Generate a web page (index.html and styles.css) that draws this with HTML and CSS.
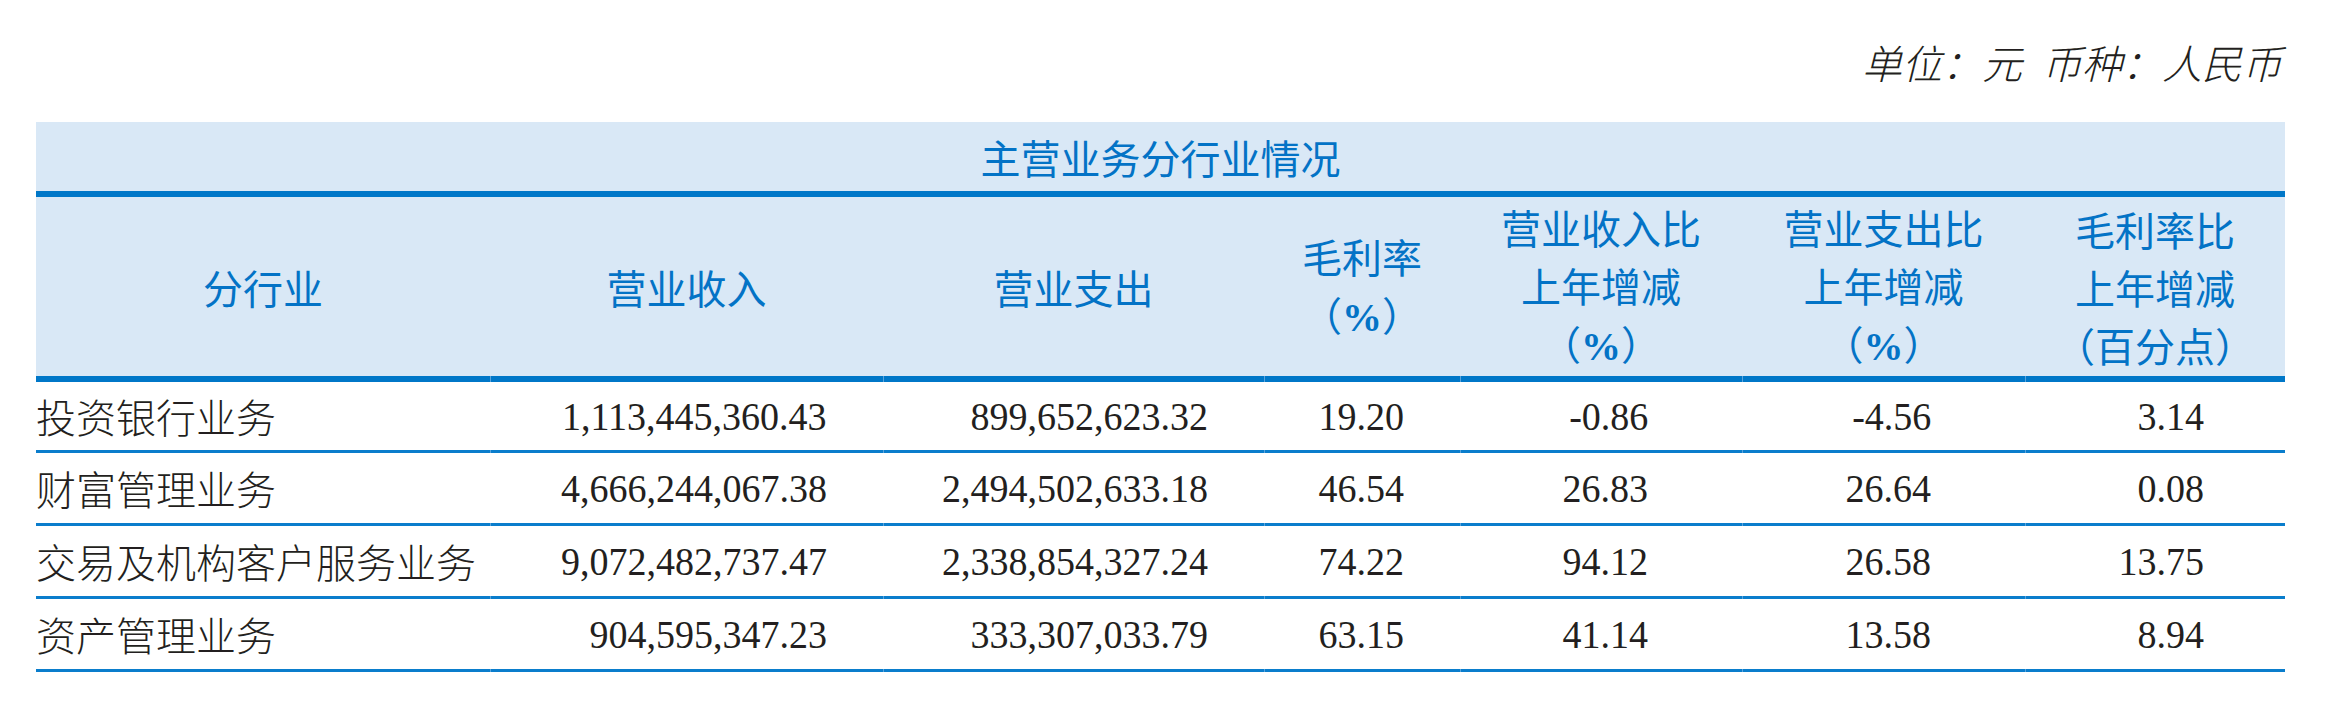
FILE: index.html
```html
<!DOCTYPE html>
<html lang="zh-CN">
<head>
<meta charset="utf-8">
<title>主营业务分行业情况</title>
<link rel="stylesheet" href="styles.css">
</head>
<body>
<div class="page">
  <div class="unit">单位：元&ensp;币种：人民币</div>
  <table class="tbl">
    <colgroup>
      <col class="w1"><col class="w2"><col class="w3"><col class="w4"><col class="w5"><col class="w6"><col class="w7">
    </colgroup>
    <thead>
      <tr class="title-row"><th colspan="7">主营业务分行业情况</th></tr>
      <tr class="head-row">
        <th>分行业</th>
        <th class="sep">营业收入</th>
        <th class="sep">营业支出</th>
        <th class="sep">毛利率<br>（<span class="pct">%</span>）</th>
        <th class="sep">营业收入比<br>上年增减<br>（<span class="pct">%</span>）</th>
        <th class="sep">营业支出比<br>上年增减<br>（<span class="pct">%</span>）</th>
        <th class="sep">毛利率比<br>上年增减<br>（百分点）</th>
      </tr>
    </thead>
    <tbody>
      <tr>
        <td class="label">投资银行业务</td>
        <td class="num c2 sep"><span>1,113,445,360.43</span></td>
        <td class="num c3 sep"><span>899,652,623.32</span></td>
        <td class="num c4 sep"><span>19.20</span></td>
        <td class="num c5 sep"><span>-0.86</span></td>
        <td class="num c6 sep"><span>-4.56</span></td>
        <td class="num c7 sep"><span>3.14</span></td>
      </tr>
      <tr>
        <td class="label">财富管理业务</td>
        <td class="num c2 sep"><span>4,666,244,067.38</span></td>
        <td class="num c3 sep"><span>2,494,502,633.18</span></td>
        <td class="num c4 sep"><span>46.54</span></td>
        <td class="num c5 sep"><span>26.83</span></td>
        <td class="num c6 sep"><span>26.64</span></td>
        <td class="num c7 sep"><span>0.08</span></td>
      </tr>
      <tr>
        <td class="label">交易及机构客户服务业务</td>
        <td class="num c2 sep"><span>9,072,482,737.47</span></td>
        <td class="num c3 sep"><span>2,338,854,327.24</span></td>
        <td class="num c4 sep"><span>74.22</span></td>
        <td class="num c5 sep"><span>94.12</span></td>
        <td class="num c6 sep"><span>26.58</span></td>
        <td class="num c7 sep"><span>13.75</span></td>
      </tr>
      <tr>
        <td class="label">资产管理业务</td>
        <td class="num c2 sep"><span>904,595,347.23</span></td>
        <td class="num c3 sep"><span>333,307,033.79</span></td>
        <td class="num c4 sep"><span>63.15</span></td>
        <td class="num c5 sep"><span>41.14</span></td>
        <td class="num c6 sep"><span>13.58</span></td>
        <td class="num c7 sep"><span>8.94</span></td>
      </tr>
    </tbody>
  </table>
</div>
</body>
</html>
```
FILE: styles.css
```css
html, body {
  margin: 0;
  padding: 0;
  background: #ffffff;
}

.page {
  width: 2249px;
  padding-left: 36px;
}

.unit {
  font-family: "Noto Sans CJK SC", sans-serif;
  font-size: 40px;
  font-style: italic;
  font-weight: 300;
  color: #231f20;
  text-align: right;
  line-height: 40px;
  height: 40px;
  padding-top: 42px;
  padding-right: 3px;
  margin-bottom: 40px;
}

.tbl {
  width: 2249px;
  table-layout: fixed;
  border-collapse: separate;
  border-spacing: 0;
}

.w1 { width: 454px; }
.w2 { width: 393px; }
.w3 { width: 381px; }
.w4 { width: 196px; }
.w5 { width: 282px; }
.w6 { width: 283px; }
.w7 { width: 260px; }

.tbl th {
  position: relative;
  background: #d9e8f6;
  color: #0373c6;
  font-family: "Noto Sans CJK SC", sans-serif;
  font-size: 40px;
  font-weight: 400;
  line-height: 58px;
  padding: 0;
  text-align: center;
  vertical-align: middle;
}

.title-row th {
  height: 69px;
  border-bottom: 6px solid #0077c8;
}

.head-row th {
  height: 179px;
  border-bottom: 6px solid #0077c8;
}

.pct {
  font-family: "Liberation Serif", serif;
  font-weight: 700;
}

.tbl td {
  position: relative;
  height: 70px;
  padding: 0;
  border-bottom: 3px solid #0a7dcc;
  color: #231f20;
  vertical-align: middle;
  white-space: nowrap;
}

.tbl tbody tr:first-child td {
  height: 68px;
}

.tbl td.label {
  font-family: "Noto Sans CJK SC", sans-serif;
  font-size: 40px;
  font-weight: 300;
  text-align: left;
}

.tbl td.num {
  font-family: "Liberation Serif", serif;
  font-size: 40px;
  text-align: right;
}

.num span {
  display: inline-block;
  transform: scaleX(0.95);
  transform-origin: right center;
}

.c2, .c3, .c4 { padding-right: 56px !important; }
.c5, .c6 { padding-right: 94px !important; }
.c7 { padding-right: 81px !important; }

.sep::after {
  content: "";
  position: absolute;
  left: 0;
  width: 1px;
  background: #5aa3dc;
}

.head-row .sep::after {
  bottom: -6px;
  height: 6px;
}

td.sep::after {
  bottom: -3px;
  height: 3px;
}
```
